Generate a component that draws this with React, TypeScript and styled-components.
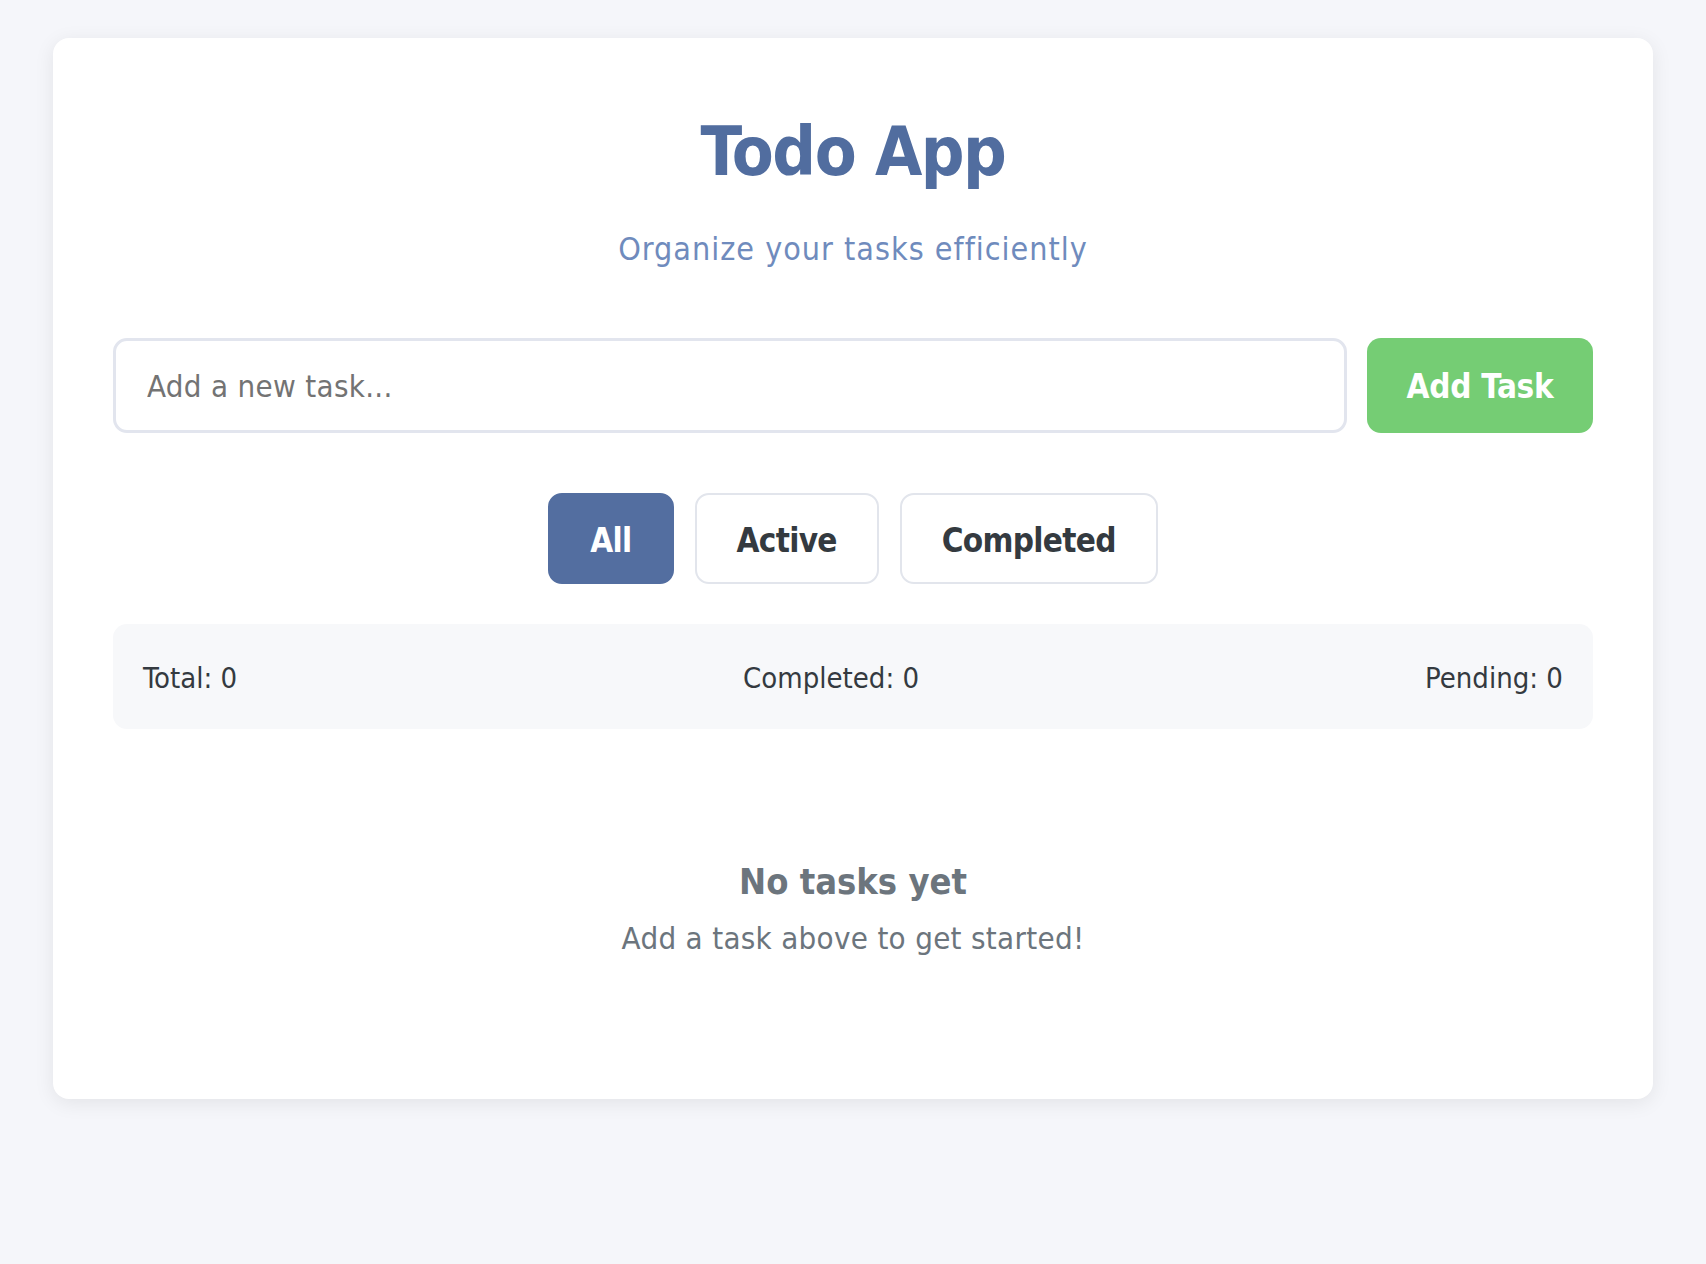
import React, { useState } from "react"
import styled, { createGlobalStyle } from "styled-components"

const GlobalStyle = createGlobalStyle`
    * {
        box-sizing: border-box;
    }
    body {
        margin: 0;
        background: #f5f6fa;
        font-family: "DejaVu Sans Condensed", "DejaVu Sans", sans-serif;
    }
`

const Card = styled.main`
    max-width: 1600px;
    margin: 38px auto;
    padding: 60px;
    background: #ffffff;
    border-radius: 16px;
    box-shadow: 0 4px 20px rgba(0, 0, 0, 0.08);
`

const Header = styled.header`
    text-align: center;
    margin-bottom: 70px;
`

const Title = styled.h1`
    margin: 13px 0 37px;
    font-size: 68px;
    line-height: 1.2;
    font-weight: 700;
    letter-spacing: -1.5px;
    color: #516d9f;
`

const Subtitle = styled.p`
    margin: 0;
    font-size: 32px;
    line-height: 1.2;
    letter-spacing: 1px;
    color: #6f8bbd;
`

const InputRow = styled.form`
    display: flex;
    gap: 20px;
    height: 95px;
    margin-bottom: 60px;
`

const TaskInput = styled.input`
    flex: 1;
    padding: 2px 31px 0;
    border: 3px solid #e2e5ee;
    border-radius: 14px;
    font: inherit;
    font-size: 31px;
    letter-spacing: 0.3px;
    color: #343a40;
    outline: none;

    &::placeholder {
        color: #737373;
    }
`

const AddButton = styled.button`
    width: 226px;
    border: none;
    border-radius: 14px;
    background: #75cd74;
    color: #ffffff;
    font: inherit;
    font-size: 33px;
    font-weight: 700;
    letter-spacing: -0.3px;
    padding-top: 3px;
    cursor: pointer;
`

const Filters = styled.div`
    display: flex;
    justify-content: center;
    gap: 21px;
    margin-bottom: 40px;
`

const FilterButton = styled.button<{ $active?: boolean }>`
    height: 91px;
    padding: 4px 40px 0;
    border: 2px solid ${(p) => (p.$active ? "#536ea0" : "#e2e5ec")};
    border-radius: 14px;
    background: ${(p) => (p.$active ? "#536ea0" : "#ffffff")};
    color: ${(p) => (p.$active ? "#ffffff" : "#343a40")};
    font: inherit;
    font-size: 33px;
    font-weight: 700;
    letter-spacing: -0.7px;
    line-height: 1.2;
    cursor: pointer;
`

const Stats = styled.div`
    display: flex;
    justify-content: space-between;
    align-items: center;
    height: 105px;
    padding: 3px 30px 0;
    margin-bottom: 40px;
    background: #f7f8fa;
    border-radius: 14px;
    font-size: 29px;
    line-height: 1.2;
    color: #343a40;
`

const Empty = styled.div`
    padding: 91px 0 82px;
    text-align: center;
    color: #6c757d;
`

const EmptyTitle = styled.h3`
    margin: 0 0 17px;
    font-size: 36px;
    line-height: 1.2;
    font-weight: 700;
`

const EmptyText = styled.p`
    margin: 0;
    font-size: 31px;
    line-height: 1.2;
    letter-spacing: 0.3px;
`

type Filter = "all" | "active" | "completed"

export default function App() {
    const [filter, setFilter] = useState<Filter>("all")
    const [text, setText] = useState("")

    return (
        <>
            <GlobalStyle />
            <Card>
                <Header>
                    <Title>Todo App</Title>
                    <Subtitle>Organize your tasks efficiently</Subtitle>
                </Header>

                <InputRow onSubmit={(e) => e.preventDefault()}>
                    <TaskInput
                        placeholder="Add a new task..."
                        value={text}
                        onChange={(e) => setText(e.target.value)}
                    />
                    <AddButton type="submit">Add Task</AddButton>
                </InputRow>

                <Filters>
                    <FilterButton $active={filter === "all"} onClick={() => setFilter("all")}>
                        All
                    </FilterButton>
                    <FilterButton $active={filter === "active"} onClick={() => setFilter("active")}>
                        Active
                    </FilterButton>
                    <FilterButton
                        $active={filter === "completed"}
                        onClick={() => setFilter("completed")}
                    >
                        Completed
                    </FilterButton>
                </Filters>

                <Stats>
                    <span>Total: 0</span>
                    <span>Completed: 0</span>
                    <span>Pending: 0</span>
                </Stats>

                <Empty>
                    <EmptyTitle>No tasks yet</EmptyTitle>
                    <EmptyText>Add a task above to get started!</EmptyText>
                </Empty>
            </Card>
        </>
    )
}
